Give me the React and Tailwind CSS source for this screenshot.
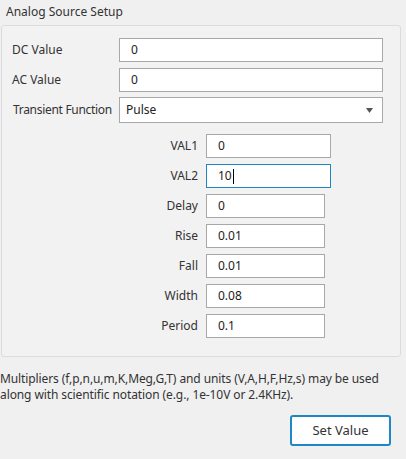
import React from "react";

const font = { fontFamily: '"Noto Sans", "Open Sans", sans-serif' };

function Field({ value, className = "", cursor = false }) {
  return (
    <div className={`h-[24px] bg-white border flex items-center text-[12px] text-[#222] ${className}`}>
      <span>{value}</span>
      {cursor && <span className="inline-block w-px h-[15px] bg-black ml-px" />}
    </div>
  );
}

const pulse = [
  { label: "VAL1", value: "0", wide: true },
  { label: "VAL2", value: "10", wide: true, focus: true },
  { label: "Delay", value: "0" },
  { label: "Rise", value: "0.01" },
  { label: "Fall", value: "0.01" },
  { label: "Width", value: "0.08" },
  { label: "Period", value: "0.1" },
];

export default function App() {
  return (
    <div className="w-[406px] h-[459px] bg-[#f0f0f0] text-[#333] text-[12px] overflow-hidden" style={font}>
      <div className="h-[25px] pl-[6px] pt-[3px] leading-[17px]">Analog Source Setup</div>

      <div className="ml-[1px] w-[400px] border border-[#dcdcdc] rounded-[3px] bg-[#f2f2f2] pl-[10px] pr-[17px] pt-[12px] pb-[18px]">
        <div className="flex flex-col gap-[6px]">
          <div className="flex items-center">
            <span className="w-[107px]">DC Value</span>
            <Field value="0" className="flex-1 border-[#a8a8a8] pl-[11px]" />
          </div>
          <div className="flex items-center">
            <span className="w-[107px]">AC Value</span>
            <Field value="0" className="flex-1 border-[#a8a8a8] pl-[11px]" />
          </div>
          <div className="flex items-center -mt-px">
            <span className="w-[107px] pl-[1px] tracking-[-0.3px] whitespace-nowrap">Transient Function</span>
            <div className="flex-1 h-[26px] bg-white border border-[#a8a8a8] flex items-center justify-between pl-[6px] pr-[9px] text-[#222]">
              <span>Pulse</span>
              <svg width="7" height="5" viewBox="0 0 7 5">
                <path d="M0 0h7L3.5 5z" fill="#555" />
              </svg>
            </div>
          </div>
        </div>

        <div className="flex flex-col gap-[6px] mt-[11px]">
          {pulse.map((p) => (
            <div key={p.label} className="flex items-center">
              <span className="w-[187px] text-right pr-[1px]">{p.label}</span>
              <Field
                value={p.value}
                cursor={p.focus}
                className={`ml-[7px] pl-[11px] ${p.wide ? "w-[125px]" : "w-[119px]"} ${
                  p.focus ? "border-[#1f86bf]" : "border-[#a8a8a8]"
                }`}
              />
            </div>
          ))}
        </div>
      </div>

      <p className="mt-[14px] leading-[16px] tracking-[-0.1px]">
        Multipliers (f,p,n,u,m,K,Meg,G,T) and units (V,A,H,F,Hz,s) may be used
        <br />
        along with scientific notation (e.g., 1e-10V or 2.4KHz).
      </p>

      <div className="flex justify-end pr-[15px] mt-[12px]">
        <button className="w-[101px] h-[31px] bg-white border-2 border-[#1e88c6] rounded-[3px] text-[13px] text-[#333]">
          Set Value
        </button>
      </div>
    </div>
  );
}
